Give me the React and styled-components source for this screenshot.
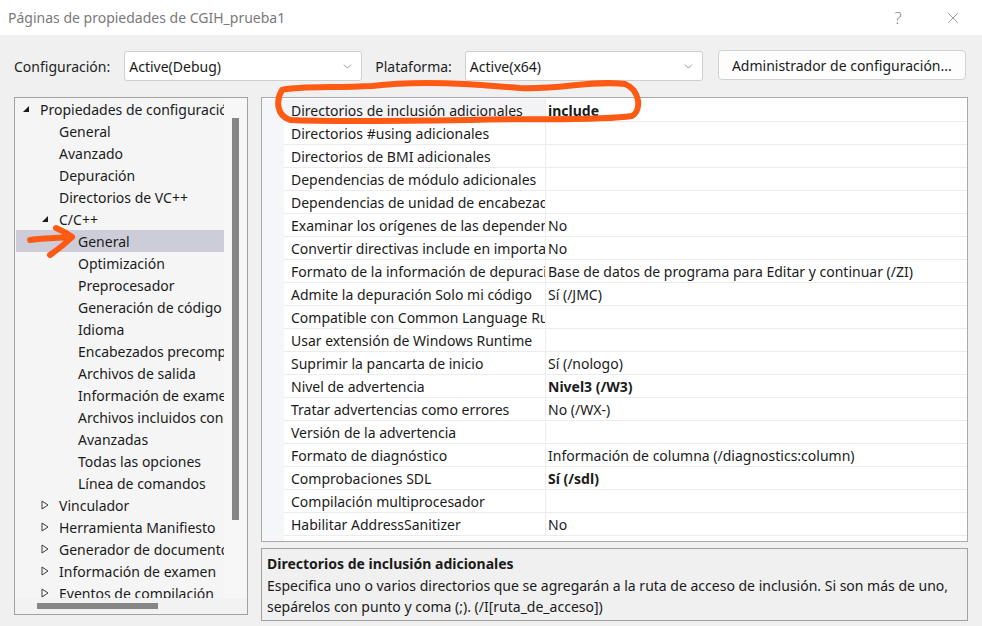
import React from "react";
import styled, { createGlobalStyle } from "styled-components";
import { ChevronDown, X } from "lucide-react";

const GlobalStyle = createGlobalStyle`
  html, body { margin: 0; padding: 0; background: #f0f0f0; }
  body { font-family: "Noto Sans", "Open Sans", sans-serif; color: #1b1b1b; }
  * { box-sizing: border-box; }
`;

const treeItems = [
  { label: "Propiedades de configuración", level: 0, toggle: "open" },
  { label: "General", level: 1 },
  { label: "Avanzado", level: 1 },
  { label: "Depuración", level: 1 },
  { label: "Directorios de VC++", level: 1 },
  { label: "C/C++", level: 1, toggle: "open" },
  { label: "General", level: 2, selected: true },
  { label: "Optimización", level: 2 },
  { label: "Preprocesador", level: 2 },
  { label: "Generación de código", level: 2 },
  { label: "Idioma", level: 2 },
  { label: "Encabezados precompilados", level: 2 },
  { label: "Archivos de salida", level: 2 },
  { label: "Información de examen", level: 2 },
  { label: "Archivos incluidos condicionales", level: 2 },
  { label: "Avanzadas", level: 2 },
  { label: "Todas las opciones", level: 2 },
  { label: "Línea de comandos", level: 2 },
  { label: "Vinculador", level: 1, toggle: "closed" },
  { label: "Herramienta Manifiesto", level: 1, toggle: "closed" },
  { label: "Generador de documentos XML", level: 1, toggle: "closed" },
  { label: "Información de examen", level: 1, toggle: "closed" },
  { label: "Eventos de compilación", level: 1, toggle: "closed" },
];

const properties = [
  { name: "Directorios de inclusión adicionales", value: "include", bold: true, selected: true },
  { name: "Directorios #using adicionales", value: "" },
  { name: "Directorios de BMI adicionales", value: "" },
  { name: "Dependencias de módulo adicionales", value: "" },
  { name: "Dependencias de unidad de encabezado adicionales", value: "" },
  { name: "Examinar los orígenes de las dependencias de módulo", value: "No" },
  { name: "Convertir directivas include en importaciones", value: "No" },
  { name: "Formato de la información de depuración", value: "Base de datos de programa para Editar y continuar (/ZI)" },
  { name: "Admite la depuración Solo mi código", value: "Sí (/JMC)" },
  { name: "Compatible con Common Language Runtime", value: "" },
  { name: "Usar extensión de Windows Runtime", value: "" },
  { name: "Suprimir la pancarta de inicio", value: "Sí (/nologo)" },
  { name: "Nivel de advertencia", value: "Nivel3 (/W3)", bold: true },
  { name: "Tratar advertencias como errores", value: "No (/WX-)" },
  { name: "Versión de la advertencia", value: "" },
  { name: "Formato de diagnóstico", value: "Información de columna (/diagnostics:column)" },
  { name: "Comprobaciones SDL", value: "Sí (/sdl)", bold: true },
  { name: "Compilación multiprocesador", value: "" },
  { name: "Habilitar AddressSanitizer", value: "No" },
];

const Window = styled.div`
  position: relative;
  width: 982px;
  height: 626px;
  display: flex;
  flex-direction: column;
  background: #f0f0f0;
  overflow: hidden;
  & > * { flex-shrink: 0; }
`;

const TitleBar = styled.div`
  height: 35px;
  background: #ffffff;
  display: flex;
  align-items: center;
  padding: 0 0 0 8px;
  font-size: 14px;
  color: #7a7a7a;
`;

const TitleText = styled.div`
  flex: 1;
`;

const TitleButton = styled.div`
  width: 58px;
  height: 35px;
  display: flex;
  align-items: center;
  justify-content: center;
  color: #8a8a8a;
  font-size: 17px;
  font-weight: 300;
  margin-left: -3px;
`;

const Toolbar = styled.div`
  display: flex;
  align-items: center;
  padding: 0 16px 0 14px;
  height: 62px;
  font-size: 14px;
`;

const Label = styled.span`
  margin-right: ${(p) => p.gap}px;
  color: #1e1e1e;
`;

const Select = styled.div`
  width: ${(p) => p.width}px;
  height: 30px;
  margin-right: ${(p) => p.gap}px;
  background: #ffffff;
  border: 1px solid #cfcfcf;
  border-radius: 3px;
  display: flex;
  align-items: center;
  justify-content: space-between;
  padding: 0 7px 0 4px;
  color: #1a1a1a;
`;

const Button = styled.div`
  width: 248px;
  height: 30px;
  background: #fdfdfd;
  border: 1px solid #d2d2d2;
  border-radius: 4px;
  display: flex;
  align-items: center;
  justify-content: center;
  margin-top: -2px;
`;

const Main = styled.div`
  display: flex;
  gap: 13px;
  padding: 0 14px;
`;

const TreePanel = styled.div`
  width: 234px;
  height: 518px;
  border: 1px solid #a2a2a2;
  background: #f5f5f5;
  display: grid;
  grid-template-columns: 209px 1fr;
  grid-template-rows: 500px 1fr;
`;

const TreeList = styled.div`
  overflow: hidden;
`;

const TreeRow = styled.div`
  height: 22px;
  display: flex;
  align-items: center;
  white-space: nowrap;
  font-size: 14px;
  margin-left: 1px;
  padding-left: ${(p) => 6 + p.level * 19}px;
  background: ${(p) => (p.selected ? "#cdcdd9" : "transparent")};
`;

const Toggle = styled.span`
  width: 18px;
  flex: none;
  display: flex;
  align-items: center;
`;

const VScroll = styled.div`
  background: #f7f7f7;
  padding: 20px 0 0 8px;
`;

const VThumb = styled.div`
  width: 7px;
  height: 402px;
  background: #868686;
`;

const HScroll = styled.div`
  grid-column: 1 / 3;
  padding: 5px 0 0 22px;
  background: #f2f2f2;
`;

const HThumb = styled.div`
  width: 121px;
  height: 6px;
  background: #868686;
`;

const RightColumn = styled.div`
  flex: 1;
  display: flex;
  flex-direction: column;
  gap: 6px;
`;

const Grid = styled.div`
  height: 445px;
  border: 1px solid #a9a9a9;
  background: #ffffff;
  padding-top: 1px;
  display: flex;
  flex-direction: column;
`;

const PropRow = styled.div`
  height: 23px;
  display: grid;
  grid-template-columns: 22px 262px 1fr;
  font-size: 14px;
`;

const Gutter = styled.div`
  background: #f4f6f9;
`;

const NameCell = styled.div`
  overflow: hidden;
  white-space: nowrap;
  padding: 0 0 0 7px;
  display: flex;
  align-items: center;
  border-bottom: 1px solid #ececec;
  border-right: 1px solid #ececec;
  background: ${(p) => (p.selected ? "#f3f3f6" : "#ffffff")};
`;

const ValueCell = styled.div`
  overflow: hidden;
  white-space: nowrap;
  padding: 0 0 0 2px;
  display: flex;
  align-items: center;
  border-bottom: 1px solid #ececec;
  font-weight: ${(p) => (p.bold ? 700 : 400)};
`;

const GridFiller = styled.div`
  flex: 1;
  display: grid;
  grid-template-columns: 22px 1fr;
`;

const Description = styled.div`
  height: 73px;
  border: 1px solid #a2a2a2;
  background: #f0f0f0;
  padding: 4px 6px 0 5px;
  font-size: 14px;
  line-height: 21.5px;
`;

const DescTitle = styled.div`
  font-weight: 700;
`;

const Annotation = styled.svg`
  position: absolute;
  left: 0;
  top: 0;
  pointer-events: none;
`;

const Triangle = ({ type }) =>
  type === "open" ? (
    <svg width="8" height="8" viewBox="0 0 8 8">
      <path d="M7 1 L7 7 L1 7 Z" fill="#1a1a1a" />
    </svg>
  ) : (
    <svg width="8" height="10" viewBox="0 0 8 10">
      <path d="M1 1 L7 5 L1 9 Z" fill="none" stroke="#3a3a3a" strokeWidth="1" />
    </svg>
  );

export default function App() {
  return (
    <Window>
      <GlobalStyle />
      <TitleBar>
        <TitleText>Páginas de propiedades de CGIH_prueba1</TitleText>
        <TitleButton>?</TitleButton>
        <TitleButton>
          <X size={18} strokeWidth={1.1} />
        </TitleButton>
      </TitleBar>

      <Toolbar>
        <Label gap={14}>Configuración:</Label>
        <Select width={238} gap={13}>
          <span>Active(Debug)</span>
          <ChevronDown size={13} strokeWidth={1.3} color="#6a6a6a" />
        </Select>
        <Label gap={13}>Plataforma:</Label>
        <Select width={238} gap={15}>
          <span>Active(x64)</span>
          <ChevronDown size={13} strokeWidth={1.3} color="#6a6a6a" />
        </Select>
        <Button>Administrador de configuración...</Button>
      </Toolbar>

      <Main>
        <TreePanel>
          <TreeList>
            {treeItems.map((item, i) => (
              <TreeRow key={i} level={item.level} selected={item.selected}>
                <Toggle>{item.toggle && <Triangle type={item.toggle} />}</Toggle>
                {item.label}
              </TreeRow>
            ))}
          </TreeList>
          <VScroll>
            <VThumb />
          </VScroll>
          <HScroll>
            <HThumb />
          </HScroll>
        </TreePanel>

        <RightColumn>
          <Grid>
            {properties.map((p, i) => (
              <PropRow key={i}>
                <Gutter />
                <NameCell selected={p.selected}>{p.name}</NameCell>
                <ValueCell bold={p.bold}>{p.value}</ValueCell>
              </PropRow>
            ))}
            <GridFiller>
              <Gutter />
            </GridFiller>
          </Grid>
          <Description>
            <DescTitle>Directorios de inclusión adicionales</DescTitle>
            <div>
              Especifica uno o varios directorios que se agregarán a la ruta de acceso de inclusión. Si son más de uno,
              sepárelos con punto y coma (;). (/I[ruta_de_acceso])
            </div>
          </Description>
        </RightColumn>
      </Main>

      <Annotation width="982" height="626" viewBox="0 0 982 626">
        <path
          d="M372 86 C420 80 470 84 520 88 C560 90 590 80 625 84 C640 90 642 110 632 116 C600 121 540 118 470 120 C400 121 330 122 290 120 C276 115 276 100 282 90 C300 86 330 88 372 86"
          fill="none"
          stroke="#ff5a14"
          strokeWidth="6"
          strokeLinecap="round"
          strokeLinejoin="round"
        />
        <path
          d="M30 240 C45 238 58 238 72 237 M56 228 C63 231 68 234 72 237 C65 244 57 250 50 255"
          fill="none"
          stroke="#ff5a14"
          strokeWidth="6"
          strokeLinecap="round"
          strokeLinejoin="round"
        />
      </Annotation>
    </Window>
  );
}
